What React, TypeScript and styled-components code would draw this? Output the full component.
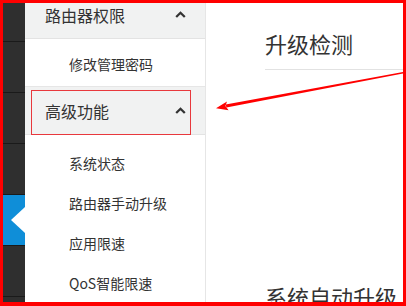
import { FunctionComponent } from "react";
import styled, { createGlobalStyle } from 'styled-components'

const GlobalStyle = createGlobalStyle`
  html, body {
    margin: 0;
    padding: 0;
    background: #fff;
  }
  body {
    font-family: "Noto Sans CJK SC", "Noto Sans", "Liberation Sans", sans-serif;
  }
`

const Chevron = () => (
  <svg width="11" height="7" viewBox="0 0 11 7">
    <polyline points="1.2,6 5.5,1.8 9.8,6" fill="none" stroke="#333" strokeWidth="2.3" />
  </svg>
)

const Arrow = () => (
  <ArrowLayer width="406" height="306" viewBox="0 0 406 306">
    <polygon points="404,71.9 404,73.4 226.4,107.6 225.7,104.4" fill="#f00" />
    <polygon points="216,108.3 227,101.4 225.4,106 228.6,110.3" fill="#f00" />
  </ArrowLayer>
)

interface GroupProps {
  title: string,
  items: string[],
  padTop: number,
  padBottom: number,
  marked?: boolean
}

const MenuGroup: FunctionComponent<GroupProps> = ({ title, items, padTop, padBottom, marked }) => (
  <>
    <GroupHeader>
      {marked && <Mark />}
      <span>{title}</span>
      <Chevron />
    </GroupHeader>
    <SubList $top={padTop} $bottom={padBottom}>
      {items.map(item => <SubItem key={item}>{item}</SubItem>)}
    </SubList>
  </>
)

export default function App() {
  const tiles = [0, 1, 2, 3, 4, 5, 6]

  return (
    <>
      <GlobalStyle />
      <Frame>
        <Scrolled>
          <Sidebar>
            {tiles.map(i => (
              <Tile key={i} $active={i === 4}>
                {i === 4 && <Pointer />}
              </Tile>
            ))}
          </Sidebar>
          <Menu>
            <MenuGroup title="路由器权限" items={['修改管理密码']} padTop={5} padBottom={2} />
            <MenuGroup
              title="高级功能"
              items={['系统状态', '路由器手动升级', '应用限速', 'QoS智能限速']}
              padTop={8}
              padBottom={0}
              marked
            />
          </Menu>
          <Content>
            <SectionTitle>升级检测</SectionTitle>
            <SectionTitle $gap={210}>系统自动升级</SectionTitle>
          </Content>
        </Scrolled>
        <Arrow />
      </Frame>
    </>
  )
}

const Frame = styled.div`
  position: relative;
  width: 406px;
  height: 306px;
  box-sizing: border-box;
  border: 3px solid #ff0000;
  border-bottom-width: 4px;
  overflow: hidden;
  background: #fff;
  display: flex;
`

const Scrolled = styled.div`
  flex: 1;
  display: flex;
  align-items: stretch;
  margin-top: -12px;
  min-width: 0;
`

const Sidebar = styled.div`
  width: 22px;
  flex-shrink: 0;
  background: #2e2e2e;
  display: flex;
  flex-direction: column;
`

const Tile = styled.div<{ $active?: boolean }>`
  height: 50px;
  flex-shrink: 0;
  border-bottom: 1px solid #1a1a1a;
  background: ${p => p.$active ? '#0f8ed8' : '#2f2f2f'};
  display: flex;
  align-items: center;
  justify-content: flex-end;
`

const Pointer = styled.div`
  width: 0;
  height: 0;
  border-top: 13.5px solid transparent;
  border-bottom: 13.5px solid transparent;
  border-right: 14px solid #fff;
`

const Menu = styled.div`
  width: 180px;
  flex-shrink: 0;
  border-right: 1px solid #e6e6e6;
  background: #fff;
`

const GroupHeader = styled.div`
  position: relative;
  height: 48px;
  box-sizing: border-box;
  padding: 0 19px 0 20px;
  display: flex;
  align-items: center;
  justify-content: space-between;
  background: #f1f2f2;
  border-bottom: 1px solid #e3e3e3;
  font-size: 16px;
  color: #333;
`

const Mark = styled.div`
  position: absolute;
  left: 6px;
  top: 3px;
  width: 160px;
  height: 45px;
  box-sizing: border-box;
  border: 1px solid #e8383d;
`

const SubList = styled.div<{ $top: number, $bottom: number }>`
  padding: ${p => p.$top}px 0 ${p => p.$bottom}px;
  border-bottom: 1px solid #e6e6e6;

  &:last-child {
    border-bottom: none;
  }
`

const SubItem = styled.div`
  height: 40px;
  display: flex;
  align-items: center;
  padding-left: 44px;
  font-size: 14px;
  color: #333;
  white-space: nowrap;
`

const Content = styled.div`
  flex: 1;
  min-width: 0;
  padding: 36px 0 0 59px;
`

const SectionTitle = styled.div<{ $gap?: number }>`
  margin-top: ${p => p.$gap || 0}px;
  font-size: 22px;
  line-height: 32px;
  color: #333;
  padding-bottom: 10px;
  border-bottom: 1px solid #e2e2e2;
  white-space: nowrap;
`

const ArrowLayer = styled.svg`
  position: absolute;
  left: -3px;
  top: -3px;
  pointer-events: none;
`
